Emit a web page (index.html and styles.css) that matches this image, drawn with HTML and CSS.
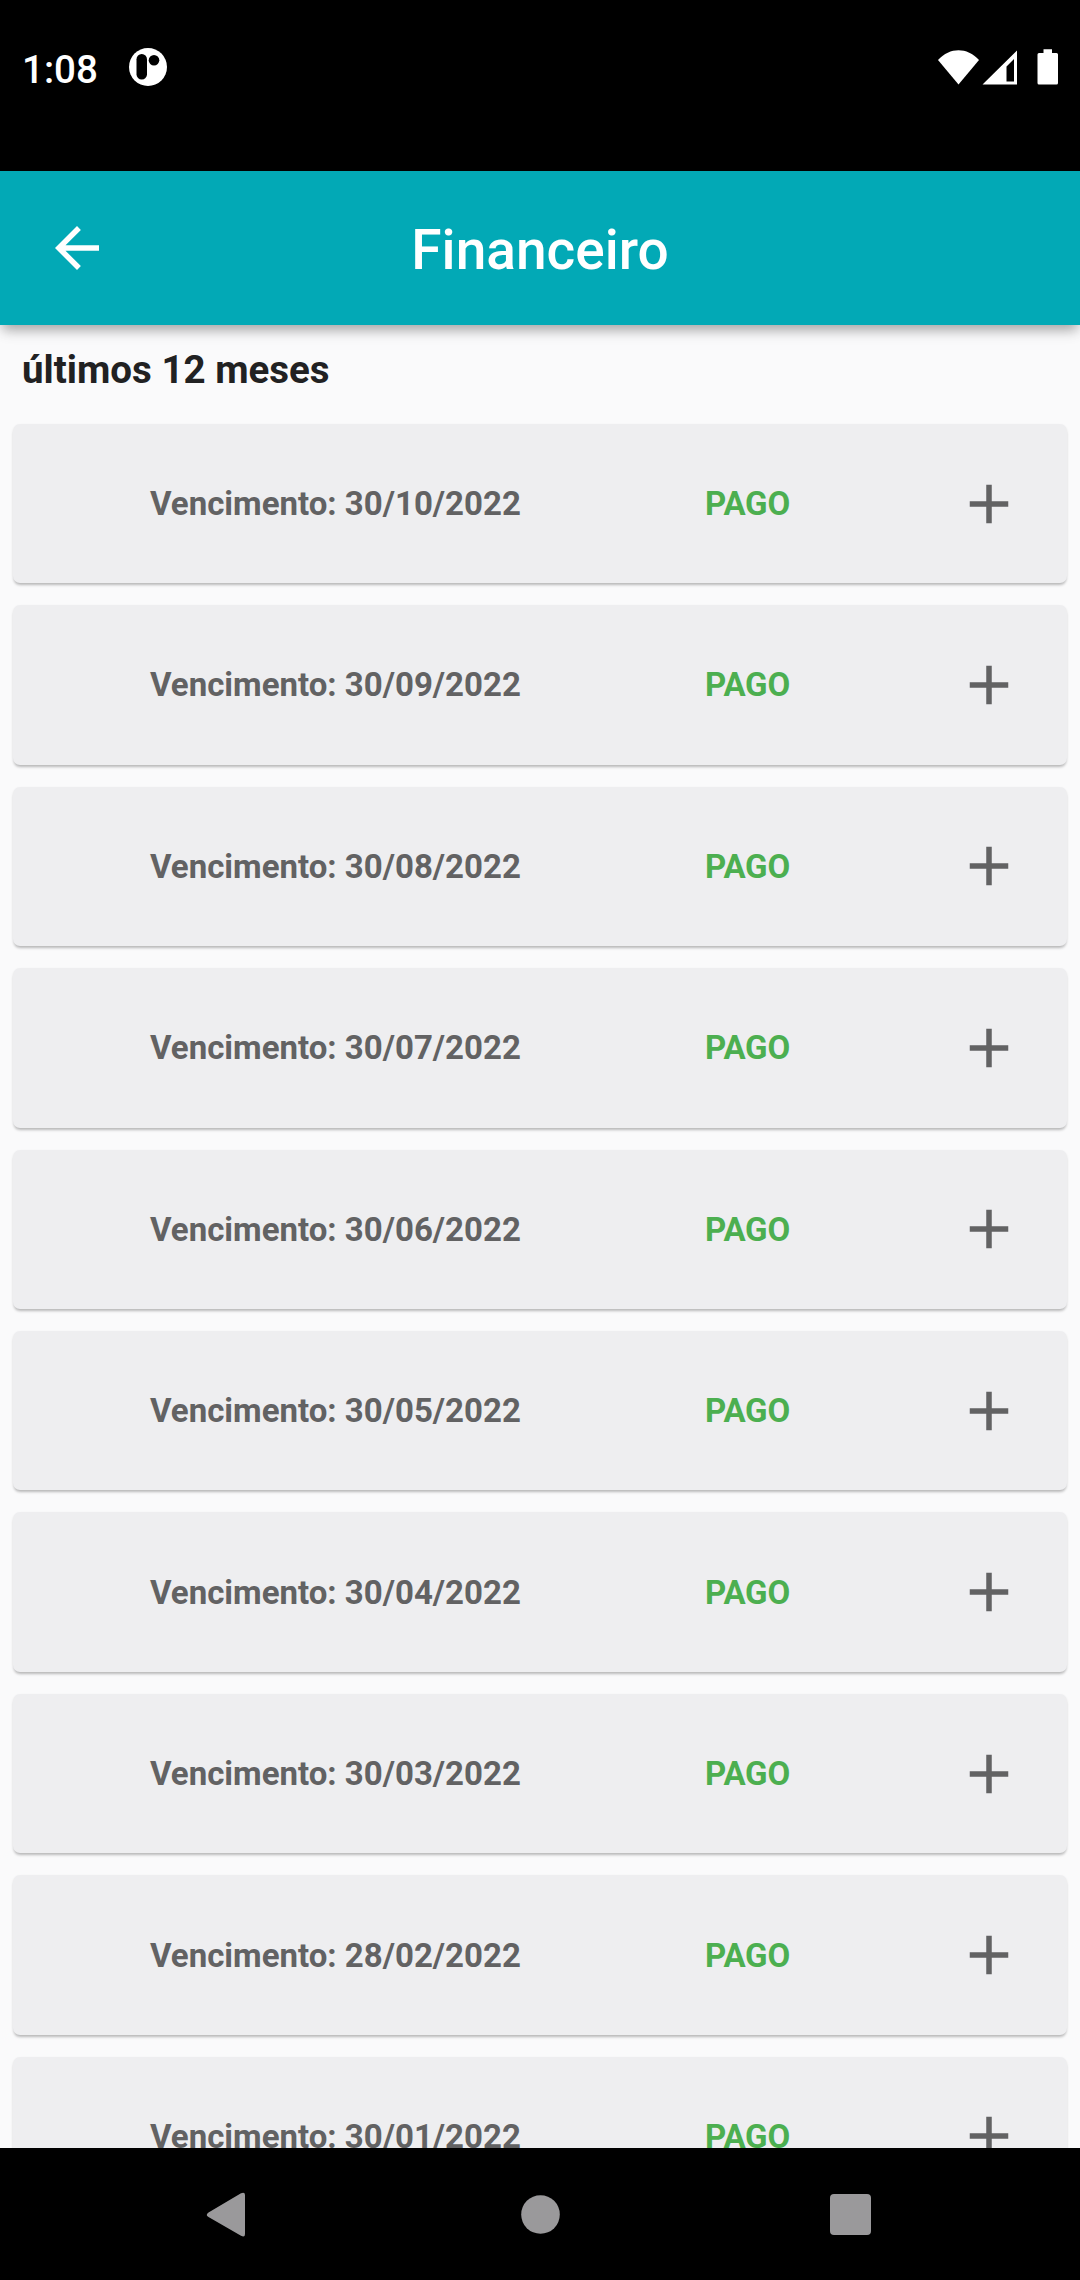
FILE: index.html
```
<!DOCTYPE html>
<html lang="pt-BR">
<head>
  <meta charset="UTF-8">
  <meta name="viewport" content="width=device-width, initial-scale=1.0">
  <title>Financeiro</title>
  <link rel="stylesheet" href="styles.css">
</head>

<body>
  <div class="status-bar">
    <span class="time">1:08</span>
    <svg class="notification" width="38" height="38" viewBox="0 0 38 38">
      <circle cx="19" cy="19" r="19" fill="#fff"/>
      <rect x="7.5" y="6" width="10.5" height="25.5" rx="5.2"/>
      <circle cx="25" cy="12.3" r="5.3"/>
    </svg>
    <svg class="system" width="122" height="38" viewBox="0 0 122 38" fill="#fff">
      <path d="M0 12C12-1 29-1 41 12L20.5 36.5z"/>
      <path fill-rule="evenodd" d="M79 2.5v34H44.500zM76 11L68.500 18.500V33.500H76z"/>
      <path d="M105.500 1.200h8.500V5h4.500q1.500 0 1.500 1.500V35q0 1.500-1.500 1.500h-17.500q-1.500 0-1.500-1.500V6.500q0-1.500 1.500-1.500h4.500z"/>
    </svg>
  </div>

  <header class="app-bar">
    <svg class="back" width="66" height="66" viewBox="0 0 24 24" fill="#fff">
      <path d="M20 11H7.830l5.590-5.590L12 4l-8 8 8 8 1.410-1.410L7.830 13H20v-2z"/>
    </svg>
    <h1>Financeiro</h1>
  </header>

  <main>
    <h2>últimos 12 meses</h2>
    <ul id="bills"></ul>
  </main>

  <nav class="nav-bar">
    <svg width="46" height="46" viewBox="0 0 46 46">
      <path d="M4.500 20.500L37 1.200Q41 -.5 41 3V42Q41 46 37 43.800L4.500 25Q1 23 4.500 20.500z"/>
    </svg>
    <svg width="46" height="46" viewBox="0 0 46 46">
      <circle cx="24.500" cy="22.500" r="19.300"/>
    </svg>
    <svg width="46" height="46" viewBox="0 0 46 46">
      <rect x="2" y="2" width="41" height="41" rx="4"/>
    </svg>
  </nav>

  <script>
  ;(function () {
    "use strict"
    const dates = [
      "30/10/2022",
      "30/09/2022",
      "30/08/2022",
      "30/07/2022",
      "30/06/2022",
      "30/05/2022",
      "30/04/2022",
      "30/03/2022",
      "28/02/2022",
      "30/01/2022"
    ]

    document.getElementById("bills").innerHTML = dates.map(date => `
      <li class="bill">
        <span class="due">Vencimento: ${date}</span>
        <span class="paid">PAGO</span>
        <svg class="plus" width="66" height="66" viewBox="0 0 24 24">
          <path d="M19 13h-6v6h-2v-6H5v-2h6V5h2v6h6z"/>
        </svg>
      </li>`
    ).join("")
  })()
  </script>
</body>
</html>
```
FILE: styles.css
```
* {
  box-sizing: border-box;
}
body {
  margin: 0;
  height: 2280px;
  display: flex;
  flex-direction: column;
  overflow: hidden;
  background-color: #fafafb;
  font-family: Roboto, sans-serif;
}
svg {
  display: block;
  flex: none;
}
.status-bar {
  flex: none;
  height: 171px;
  padding: 48px 20px 0 22px;
  display: flex;
  align-items: flex-start;
  background-color: #000;
  color: #fff;
}
.time {
  width: 106.500px;
  font-size: 38.5px;
  font-weight: 500;
  line-height: 43px;
}
.system {
  margin-left: auto;
}
.app-bar {
  flex: none;
  height: 154px;
  padding: 0 44px;
  display: grid;
  grid-template-columns: 66px 1fr 66px;
  align-items: center;
  background-color: #02a9b6;
  color: #fff;
  box-shadow: 0 8px 11px -3px rgba(0, 0, 0, 0.28), 0 3px 18px rgba(0, 0, 0, 0.1);
  z-index: 1;
}
h1 {
  margin: 0;
  padding-top: 3px;
  font-size: 55px;
  font-weight: 500;
  line-height: 64px;
  text-align: center;
}
main {
  flex: 1;
  min-height: 0;
  overflow: hidden;
}
h2 {
  margin: 0;
  padding: 22px 22px 0;
  height: 98.800px;
  font-size: 38.5px;
  font-weight: 700;
  line-height: 46px;
  color: #212122;
}
ul {
  margin: 0;
  padding: 0 13px;
  display: grid;
  gap: 22px;
  list-style: none;
}
.bill {
  height: 159.450px;
  padding: 0 45px 0 137px;
  display: grid;
  grid-template-columns: 555px 1fr 66px;
  align-items: center;
  border-radius: 7px;
  background-color: #eeeef0;
  box-shadow: 0 3px 3px -1px rgba(0, 0, 0, 0.24), 0 1px 3px rgba(0, 0, 0, 0.06);
  font-size: 33px;
  font-weight: 700;
}
.due {
  color: #626263;
}
.paid {
  color: #4caf50;
  letter-spacing: -0.2px;
}
.plus {
  fill: #626263;
}
.nav-bar {
  flex: none;
  height: 132px;
  padding: 2px 206px 0 204px;
  display: flex;
  justify-content: space-between;
  align-items: center;
  background-color: #000;
  fill: #9a999b;
}
```
